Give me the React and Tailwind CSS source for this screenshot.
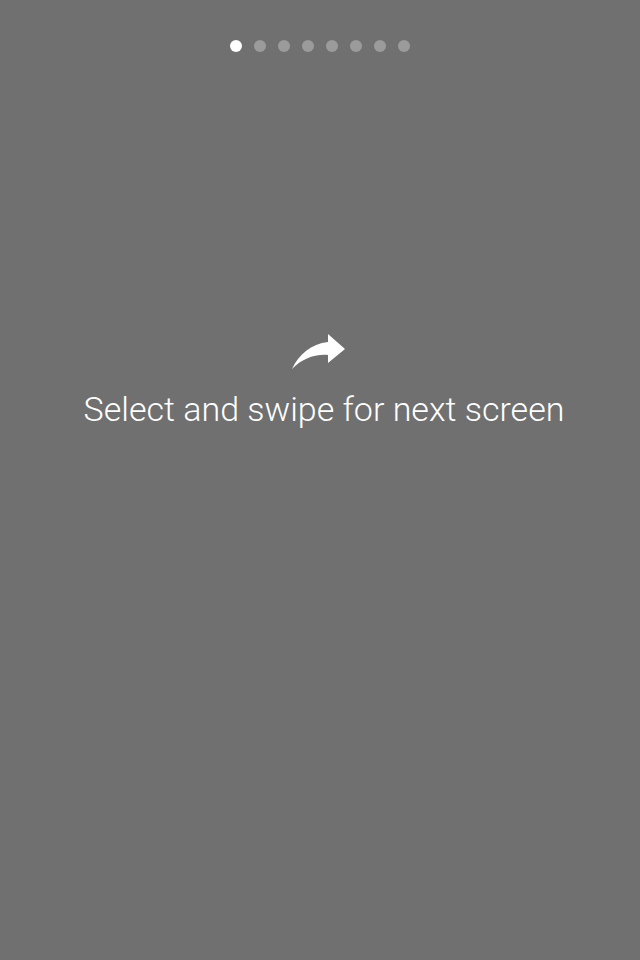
import React from 'react';

const App = () => {
    const dots = [0, 1, 2, 3, 4, 5, 6, 7];
    return (
        <div className="w-[640px] h-[960px] bg-[#707070] flex flex-col items-center" style={{ fontFamily: 'Roboto, "Liberation Sans", sans-serif' }}>
            {/* pager dots */}
            <div className="flex gap-[12px] pt-[40px]">
                {dots.map((i) => (
                    <div
                        key={i}
                        className={i === 0 ? 'w-[12px] h-[12px] rounded-full bg-white' : 'w-[12px] h-[12px] rounded-full bg-[#9b9b9b]'}
                    />
                ))}
            </div>

            {/* swipe hint */}
            <div className="flex flex-col items-center mt-[279px] ml-[8px]">
                <svg width="60" height="40" viewBox="0 0 60 40" className="mr-[8px]">
                    <path
                        d="M38 3 L55 18 L38 32 L38 24 C 24 23, 12 28, 2 38 C 9 23, 21 13, 38 11 Z"
                        fill="#ffffff"
                    />
                </svg>
                <div className="text-white text-[34px] font-light leading-[40px] mt-[18px]">
                    Select and swipe for next screen
                </div>
            </div>
        </div>
    );
};

export default App;
